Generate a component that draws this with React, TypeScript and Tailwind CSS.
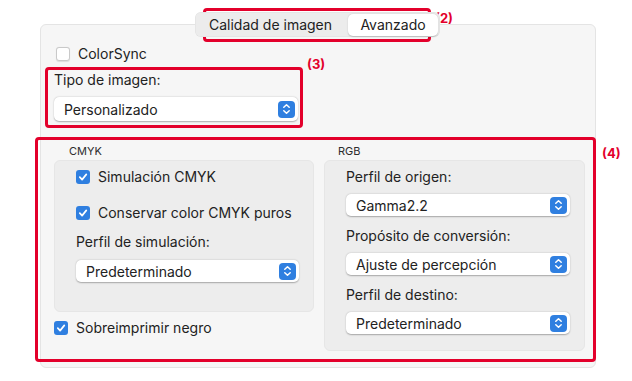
import React from 'react'

const font = { fontFamily: 'Inter, "Liberation Sans", sans-serif' }

function Check({ checked }: { checked?: boolean }) {
  if (!checked) {
    return <div className="w-[14px] h-[14px] rounded-[3px] bg-white border border-[#c9c9c9] shadow-[0_0.5px_1px_rgba(0,0,0,0.1)] flex-shrink-0" />
  }
  return (
    <div className="w-[14px] h-[14px] rounded-[3px] bg-[#2f7fe0] flex items-center justify-center flex-shrink-0">
      <svg width="10" height="10" viewBox="0 0 10 10">
        <path d="M1.8 5.2 L4.1 7.6 L8.3 2.4" stroke="white" strokeWidth="1.7" fill="none" strokeLinecap="round" strokeLinejoin="round" />
      </svg>
    </div>
  )
}

function CheckRow({ label, checked }: { label: string; checked?: boolean }) {
  return (
    <div className="flex items-center gap-[8px] h-[16px]">
      <Check checked={checked} />
      <span className="text-[14px] text-[#222] leading-[16px]">{label}</span>
    </div>
  )
}

function Popup({ value, className = '' }: { value: string; className?: string }) {
  return (
    <div className={`h-[22px] bg-white rounded-[5px] shadow-[0_0.5px_1.5px_rgba(0,0,0,0.3)] flex items-center justify-between pl-[10px] pr-[3px] ${className}`}>
      <span className="text-[14px] text-[#222]">{value}</span>
      <div className="w-[17px] h-[17px] rounded-[4px] bg-[#2f7fe0] flex items-center justify-center">
        <svg width="9" height="12" viewBox="0 0 9 12">
          <path d="M1.8 4.3 L4.5 1.8 L7.2 4.3 M1.8 7.7 L4.5 10.2 L7.2 7.7" stroke="white" strokeWidth="1.5" fill="none" strokeLinecap="round" strokeLinejoin="round" />
        </svg>
      </div>
    </div>
  )
}

function Label({ text }: { text: string }) {
  return <div className="text-[14px] text-[#222] leading-[16px]">{text}</div>
}

function Annot({ box, tag, tagPos }: { box: string; tag: string; tagPos: string }) {
  return (
    <>
      <div className={`absolute border-[3px] border-[#e3002b] rounded-[4px] ${box}`} />
      <div className={`absolute text-[13px] font-bold text-[#e3002b] leading-[14px] ${tagPos}`}>{tag}</div>
    </>
  )
}

export default function App() {
  return (
    <div className="relative w-[632px] h-[381px] bg-white overflow-hidden flex flex-col" style={font}>
      {/* Tabs */}
      <div className="mt-[12px] ml-[195px] relative z-10 w-[245px] h-[25px] rounded-[6px] bg-[#ececec] shadow-[inset_0_0_0_0.5px_rgba(0,0,0,0.06)] flex items-center pr-[2px]">
        <div className="flex-1 pl-[14px] text-[14px] text-[#222]">Calidad de imagen</div>
        <div className="w-[90px] h-[22px] rounded-[5px] bg-white shadow-[0_0.5px_1.5px_rgba(0,0,0,0.2)] flex items-center justify-center text-[14px] text-[#222]">Avanzado</div>
      </div>

      {/* Panel */}
      <div className="-mt-[13px] ml-[40px] w-[556px] h-[344px] rounded-[6px] bg-[#f6f6f6] border border-[#e4e4e4] pl-[13px] pt-[21px]">
        <div className="pl-[2px]">
          <CheckRow label="ColorSync" />
        </div>
        <div className="mt-[10px]">
          <Label text="Tipo de imagen:" />
        </div>
        <Popup value="Personalizado" className="mt-[9px] w-[244px] h-[24px]" />

        <div className="mt-[23px] flex gap-[10px]">
          <div className="flex flex-col">
            <div className="pl-[15px] text-[11px] text-[#2d2d2d] leading-[14px] h-[16px]">CMYK</div>
            <div className="w-[260px] h-[152px] rounded-[6px] bg-[#ededed] border border-[#e6e6e6] pl-[21px] pt-[8px]">
              <CheckRow label="Simulación CMYK" checked />
              <div className="mt-[20px]">
                <CheckRow label="Conservar color CMYK puros" checked />
              </div>
              <div className="mt-[13px]">
                <Label text="Perfil de simulación:" />
              </div>
              <Popup value="Predeterminado" className="mt-[10px] w-[223px]" />
            </div>
            <div className="mt-[8px]">
              <CheckRow label="Sobreimprimir negro" checked />
            </div>
          </div>

          <div className="flex flex-col">
            <div className="pl-[14px] text-[11px] text-[#2d2d2d] leading-[14px] h-[16px]">RGB</div>
            <div className="w-[261px] h-[191px] rounded-[6px] bg-[#ededed] border border-[#e6e6e6] pl-[21px] pt-[8px]">
              <Label text="Perfil de origen:" />
              <Popup value="Gamma2.2" className="mt-[9px] w-[224px]" />
              <div className="mt-[12px]">
                <Label text="Propósito de conversión:" />
              </div>
              <Popup value="Ajuste de percepción" className="mt-[9px] w-[224px]" />
              <div className="mt-[12px]">
                <Label text="Perfil de destino:" />
              </div>
              <Popup value="Predeterminado" className="mt-[9px] w-[224px]" />
            </div>
          </div>
        </div>
      </div>

      {/* Annotations */}
      <Annot box="left-[203px] top-[8px] w-[228px] h-[34px]" tag="(2)" tagPos="left-[435px] top-[11px]" />
      <Annot box="left-[45px] top-[67px] w-[258px] h-[61px]" tag="(3)" tagPos="left-[307px] top-[57px]" />
      <Annot box="left-[35px] top-[137px] w-[561px] h-[225px]" tag="(4)" tagPos="left-[602px] top-[146px]" />
    </div>
  )
}
